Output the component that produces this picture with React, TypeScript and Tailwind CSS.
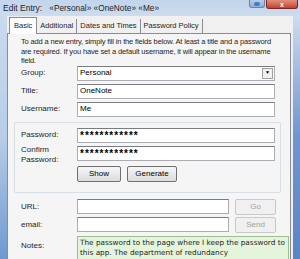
import React from 'react';

const font = { fontFamily: '"Liberation Sans", Arial, sans-serif' };

function Field({ w = 'w-[198px]', children, className = '' }: { w?: string; children?: React.ReactNode; className?: string }) {
  return (
    <div className={`${w} h-[15px] bg-white border border-[#abadb3] border-t-[#7a7c83] flex items-center px-[2px] text-[8px] text-black ${className}`}>
      {children}
    </div>
  );
}

function Btn({ label, disabled = false, w = 'w-[44px]' }: { label: string; disabled?: boolean; w?: string }) {
  return (
    <div
      className={`${w} h-[16px] flex items-center justify-center text-[8px] border rounded-[2px] ${
        disabled
          ? 'border-[#c8c8c8] bg-[#f0f0f0] text-[#a0a0a0]'
          : 'border-[#707070] bg-gradient-to-b from-[#f6f6f6] to-[#dcdcdc] text-black'
      }`}
    >
      {label}
    </div>
  );
}

export default function App() {
  return (
    <div className="w-[300px] h-[259px] overflow-hidden flex flex-col bg-[#c7d8ec] text-[#1e1e1e]" style={font}>
      {/* title bar */}
      <div className="h-[16px] flex items-start pl-[3px] bg-gradient-to-b from-[#c2d5ec] to-[#cddcee]">
        <div className="pt-[2px] text-[8.5px] whitespace-nowrap">
          Edit Entry:&nbsp;&nbsp;&nbsp;<span className="text-[8.3px]">«Personal» «OneNote» «Me»</span>
        </div>
        <div className="ml-auto flex gap-[1px] mr-[2px]">
          <div className="w-[16px] h-[8px] rounded-b-[3px] border border-t-0 border-[#6d82a3] bg-gradient-to-b from-[#b9cbe3] to-[#8fb0d8] flex items-center justify-center">
            <div className="w-[6px] h-[4px] rounded-full bg-[#3f7fd0]" />
          </div>
          <div className="w-[32px] h-[9px] rounded-b-[3px] border border-t-0 border-[#7a2a1e] bg-gradient-to-b from-[#e08f7d] to-[#c4402a] flex items-center justify-center text-white text-[7px] font-bold leading-none">
            x
          </div>
        </div>
      </div>

      <div className="flex-1 flex min-h-0">
        <div className="w-[7px] bg-gradient-to-b from-[#c9daee] via-[#b7cde8] to-[#6f98d0]" />
        <div className="flex-1 flex flex-col bg-[#f0f0f0] pt-[1px] min-w-0">
          {/* tabs */}
          <div className="h-[16px] flex items-end text-[7.5px] pl-[2px] whitespace-nowrap">
            <div className="h-[17px] px-[4px] flex items-center bg-white border border-[#898c95] border-b-0 relative z-10 -mb-[1px]">
              Basic
            </div>
            <div className="h-[14px] px-[3px] flex items-center border-r border-[#898c95]">Additional</div>
            <div className="h-[14px] px-[3px] flex items-center border-r border-[#898c95]">Dates and Times</div>
            <div className="h-[14px] px-[3px] flex items-center border-r border-[#898c95]">Password Policy</div>
          </div>

          {/* panel */}
          <div className="flex-1 w-[284px] border border-[#898c95] border-b-0 bg-[#f5f5f5] pl-[6px] pt-[3px] text-[8px]">
            <p className="text-[7.5px] leading-[9.5px] pl-[7px] whitespace-nowrap tracking-[-0.15px]">
              To add a new entry, simply fill in the fields below. At least a title and a password<br />
              are required. If you have set a default username, it will appear in the username<br />
              field.
            </p>

            <div className="flex flex-col gap-[3px] pl-[7px]">
              <div className="flex items-center">
                <div className="w-[56px]">Group:</div>
                <Field className="justify-between pr-0">
                  <span>Personal</span>
                  <span className="w-[11px] h-[11px] border border-[#a0a0a0] bg-[#f0f0f0] flex items-center justify-center text-[5px] mr-[1px]">▼</span>
                </Field>
              </div>
              <div className="flex items-center">
                <div className="w-[56px]">Title:</div>
                <Field>OneNote</Field>
              </div>
              <div className="flex items-center">
                <div className="w-[56px]">Username:</div>
                <Field>Me</Field>
              </div>
            </div>

            <div className="mt-[5px] w-[267px] border border-[#d5dfe5] rounded-[2px] pl-[6px] pt-[5px] pb-[10px] flex flex-col gap-[3px]">
              <div className="flex items-center">
                <div className="w-[56px]">Password:</div>
                <Field className="tracking-[1px] text-[10px] font-bold">************</Field>
              </div>
              <div className="flex items-center h-[15px]">
                <div className="w-[56px] leading-[9.5px] pt-[3px]">Confirm<br />Password:</div>
                <Field className="tracking-[1px] text-[10px] font-bold">************</Field>
              </div>
              <div className="flex gap-[6px] pl-[56px] mt-[2px]">
                <Btn label="Show" />
                <Btn label="Generate" w="w-[50px]" />
              </div>
            </div>

            <div className="mt-[6px] flex flex-col gap-[2px] pl-[7px]">
              <div className="flex items-center">
                <div className="w-[56px]">URL:</div>
                <Field w="w-[152px]" />
                <div className="ml-[6px]"><Btn label="Go" disabled w="w-[41px]" /></div>
              </div>
              <div className="flex items-center">
                <div className="w-[56px]">email:</div>
                <Field w="w-[152px]" />
                <div className="ml-[6px]"><Btn label="Send" disabled w="w-[41px]" /></div>
              </div>
              <div className="flex items-start mt-[1px]">
                <div className="w-[56px] pt-[4px]">Notes:</div>
                <div className="w-[212px] h-[40px] bg-[#e4f5dc] border border-[#9bbf8f] px-[2px] pt-[1px] leading-[10px]" style={{ fontFamily: '"DejaVu Sans", sans-serif', fontSize: '7.3px' }}>
                  The password to the page where I keep the password to this app. The department of redundancy
                </div>
              </div>
            </div>
          </div>
        </div>
        <div className="w-[9px] flex">
          <div className="w-[2px] bg-[#f0f0f0]" />
          <div className="flex-1 bg-gradient-to-b from-[#cddcee] via-[#6f95cf] to-[#5a86c6]" />
        </div>
      </div>
    </div>
  );
}
